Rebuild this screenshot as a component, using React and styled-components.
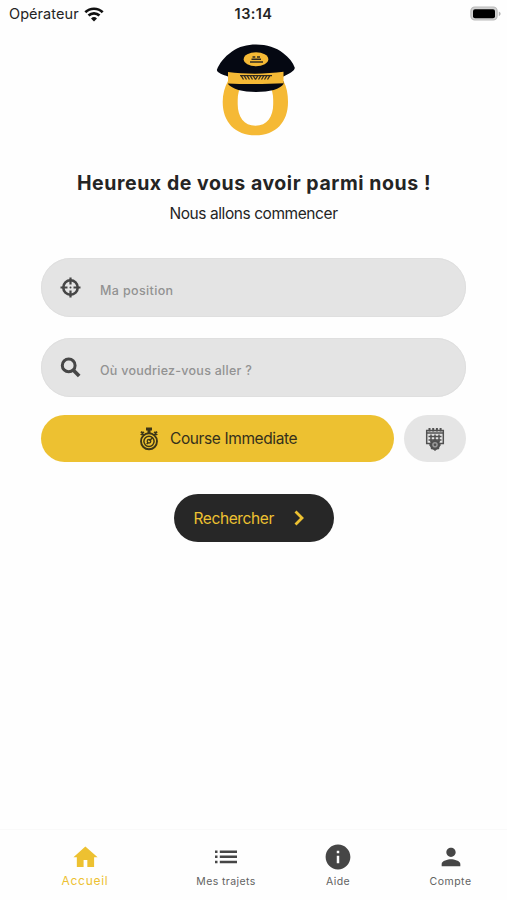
import React from "react";
import styled, { createGlobalStyle } from "styled-components";

const GlobalStyle = createGlobalStyle`
  * { box-sizing: border-box; }
  body { margin: 0; background: #fff; font-family: Inter, "Liberation Sans", sans-serif; }
  button { font-family: inherit; border: 0; padding: 0; cursor: pointer; }
  svg { display: block; flex: none; }
`;

const Screen = styled.div`
  width: 507px;
  height: 900px;
  display: flex;
  flex-direction: column;
  background: #fefefe;
  color: #242424;
  overflow: hidden;
`;

const StatusBar = styled.header`
  height: 28px;
  display: grid;
  grid-template-columns: 1fr auto 1fr;
  align-items: center;
  padding: 0 6px 0 9px;
  line-height: 28px;
`;

const Carrier = styled.div`
  display: flex;
  align-items: center;
  gap: 5px;
  font-size: 14.5px;
  letter-spacing: 0.06px;
`;

const Clock = styled.div`
  margin-right: 3px;
  font-size: 14.5px;
  font-weight: 600;
  letter-spacing: 0.4px;
`;

const BatterySlot = styled.div`
  display: flex;
  justify-content: flex-end;
`;

const Main = styled.main`
  flex: 1;
  display: flex;
  flex-direction: column;
  align-items: center;
  padding-top: 7px;
`;

const Title = styled.h1`
  margin: 25px 0 0 1px;
  font-size: 19.5px;
  font-weight: 650;
  line-height: 26px;
  letter-spacing: 0.56px;
  white-space: nowrap;
`;

const Subtitle = styled.p`
  margin: 8px 0 0;
  font-size: 15.5px;
  line-height: 20px;
  letter-spacing: -0.43px;
`;

const Form = styled.section`
  width: 425px;
  margin-top: 34px;
  display: flex;
  flex-direction: column;
`;

const Field = styled.label`
  height: 59px;
  margin-bottom: ${(p) => (p.$last ? 18 : 21)}px;
  padding: 0 20px 0 19px;
  display: flex;
  align-items: center;
  gap: 19px;
  border-radius: 30px;
  background: #e4e4e4;
  box-shadow: inset 0 0 0 1px #dfdfdf;
`;

const Placeholder = styled.span`
  padding-top: 6px;
  font-size: 12.5px;
  font-weight: 450;
  line-height: 16px;
  letter-spacing: ${(p) => p.$tracking}px;
  color: #929292;
`;

const Options = styled.div`
  display: flex;
  gap: 10px;
`;

const RideButton = styled.button`
  width: 353px;
  height: 47px;
  display: flex;
  align-items: center;
  padding-left: 97px;
  gap: 10px;
  border-radius: 24px;
  background: #edc131;
  color: #35301c;
  font-size: 15.5px;
  letter-spacing: -0.39px;
`;

const ScheduleButton = styled.button`
  width: 62px;
  height: 47px;
  display: flex;
  align-items: center;
  justify-content: center;
  border-radius: 24px;
  background: #e5e5e5;
`;

const SearchButton = styled.button`
  width: 160px;
  height: 48px;
  margin-top: 32px;
  display: flex;
  align-items: center;
  justify-content: space-between;
  padding: 0 29px 0 20px;
  border-radius: 24px;
  background: #272727;
  color: #edc131;
  font-size: 15.5px;
  letter-spacing: -0.4px;
`;

const TabBar = styled.nav`
  height: 71px;
  display: grid;
  grid-template-columns: 170px 112px 112px 113px;
  border-top: 1px solid #f9f9f9;
  background: #fefefe;
`;

const Tab = styled.a`
  display: flex;
  flex-direction: column;
  align-items: center;
  padding-top: 13px;
  gap: ${(p) => (p.$active ? 3 : 4)}px;
  color: ${(p) => (p.$active ? "#edc131" : "#464646")};
`;

const TabLabel = styled.span`
  font-size: ${(p) => (p.$active ? 12 : 10.5)}px;
  line-height: 14px;
  letter-spacing: ${(p) => p.$tracking}px;
  color: ${(p) => (p.$active ? "#edc131" : "#626262")};
`;

const WifiIcon = () => (
  <svg width="20" height="15" viewBox="0 0 18 14" fill="none" stroke="#111" strokeWidth="2.5">
    <path d="M.9 4.9a11.7 11.7 0 0 1 16.2 0" />
    <path d="M3.9 8a7.3 7.3 0 0 1 10.2 0" />
    <path d="M9 13.5 6.2 10.7a4 4 0 0 1 5.6 0Z" fill="#111" stroke="none" />
  </svg>
);

const BatteryIcon = () => (
  <svg width="31" height="16" viewBox="0 0 31 16">
    <rect x=".9" y="1" width="26.2" height="13" rx="4" fill="#d2d2d2" stroke="#b9b9b9" strokeWidth="1.2" />
    <rect x="3" y="3.3" width="22" height="9" rx="2" fill="#000" />
    <path d="M28.8 5.500c2.400.8 2.400 3.800 0 4.600Z" fill="#b5b5b5" />
  </svg>
);

const LogoMark = styled.svg`
  margin-left: 3px;
`;

const Logo = () => (
  <LogoMark width="100" height="110" viewBox="0 0 100 110">
    <path
      fill="#f5b935"
      fillRule="evenodd"
      d="M23 46h55.500c3.200 6 4.500 13 4.500 21 0 20-12 33.300-32.500 33.300S17.700 87 17.700 67c0-8 2-15 5.300-21ZM37 50c-3 4-4.300 9-4.300 15v4c0 13 6.300 21.700 17.800 21.700S68.200 82 68.200 69v-4c0-6-1.200-11-4.200-15Z"
    />
    <path fill="#050812" d="M23 46.500h55.500v2.500c-3 5-14 8-27.500 8s-24-3-28-8Z" />
    <path
      fill="#050812"
      d="M12 34.500C14 29 19 22 27 16.500 34 11.500 42 9.500 51 9.500c11 0 20 3 27 8.500 6 4.500 10 9.500 11.700 14.500.8 3-6 6.500-11.200 9H23c-5-1.500-12-4-11-7Z"
    />
    <path fill="#f5b935" d="M23 37c17 2.200 38 2.200 55.500-.2v11.400c-16 1-39 1.200-55.500.3Z" />
    <ellipse cx="51" cy="24.300" rx="12.300" ry="7" fill="#f5b935" />
    <path d="M47.500 22h2.800m1.700 0h3M46.500 24.300H56M45 27h13" stroke="#302b20" strokeWidth="1.500" />
    <path
      d="m36 40.500 2.500 4m.5-4 2.500 4m.5-4 2.500 4m.5-4 2.500 4m.5-4 2.500 4m2.500-4-2.500 4m5.500-4-2.500 4m5.500-4-2.500 4m5.500-4-2.500 4m5.500-4-2.500 4M35 40.600h32"
      fill="none"
      stroke="#302b20"
      strokeWidth="1.300"
    />
  </LogoMark>
);

const TargetIcon = () => (
  <svg width="21" height="21" viewBox="0 0 21 21" fill="none" stroke="#464646">
    <circle cx="10.500" cy="10.500" r="7.200" strokeWidth="2.600" />
    <path d="M10.500.5v7M10.500 13.500v7M.5 10.500h7M13.500 10.500h7" strokeWidth="2.200" />
    <circle cx="10.500" cy="10.500" r="1" fill="#464646" stroke="none" />
  </svg>
);

const SearchIcon = () => (
  <svg width="21" height="21" viewBox="0 0 21 21" fill="none" stroke="#464646">
    <circle cx="8.700" cy="8.400" r="6.400" strokeWidth="3" />
    <path d="m13.200 13 6 6" strokeWidth="3.700" />
  </svg>
);

const StopwatchIcon = () => (
  <svg width="22" height="24" viewBox="0 0 22 24" fill="none" stroke="#3d3517">
    <path d="M8 2h6M11 3v4" strokeWidth="3" />
    <path d="m2.800 7.800 3-3M19.200 7.800l-3-3M3 4.600l3 3.200M19 4.600l-3 3.200" strokeWidth="1.900" />
    <circle cx="11" cy="14.300" r="8" strokeWidth="1.900" />
    <circle cx="11" cy="14.300" r="5.100" strokeWidth="1.500" />
    <circle cx="11" cy="14.300" r="1.800" strokeWidth="1.300" />
    <path d="m11.500 13.800 3-3M8.700 17l1.500-1.600" strokeWidth="1.500" />
  </svg>
);

const ScheduleIcon = () => (
  <svg width="20" height="24" viewBox="0 0 20 24" fill="none" stroke="#505050">
    <path d="M5.500 16.500H1.700V3.500h16.600v13h-3.800M2 6h16" strokeWidth="1.500" />
    <path d="M4.500 1v3.500M8.200 1v3.500M11.900 1v3.500M15.600 1v3.500" strokeWidth="2" />
    <path d="M3.500 9.500h13M3.500 13h13M6 7.500V15M10 7.500V13M14 7.500V15" strokeWidth="1.500" />
    <circle cx="10" cy="17.800" r="4" fill="#999" strokeWidth="2.400" />
    <path d="M10 12v2M10 21.500v2.200M4.300 18h2M13.700 18h2M6 13.900l1.500 1.500M14 13.900l-1.500 1.500M6.100 21.900l1.500-1.500M13.900 21.900l-1.500-1.500" strokeWidth="1.600" />
    <circle cx="10" cy="17.800" r="1.300" fill="#505050" stroke="none" />
  </svg>
);

const ChevronIcon = () => (
  <svg width="12" height="18" viewBox="0 0 12 18">
    <path d="m2.500 2.500 6.500 6.500-6.500 6.500" fill="none" stroke="#edc131" strokeWidth="2.800" />
  </svg>
);

const TAB_PATHS = {
  home: "M10.800 20.500v-6h3.200v6H19.800v-8.300h3L12.300 3 2.100 12.200H5v8.300z",
  info: "M12 2C6.480 2 2 6.480 2 12s4.480 10 10 10 10-4.480 10-10S17.520 2 12 2zm1 15h-2v-6h2zm0-8h-2V7h2z",
  person: "M12 12c2.210 0 4-1.790 4-4s-1.790-4-4-4-4 1.790-4 4 1.790 4 4 4zm0 2c-2.670 0-8 1.340-8 4v2h16v-2c0-2.660-5.330-4-8-4z",
};

const TabIcon = ({ name }) =>
  name === "list" ? (
    <svg width="28" height="28" viewBox="0 0 28 28" fill="currentColor">
      <path d="M3 7.500h2.500V10H3zM3 12.600h2.500v2.500H3zM3 17.700h2.500v2.500H3zM7.800 7.500H25V10H7.800zM7.800 12.600H25v2.500H7.800zM7.800 17.700H25v2.500H7.800z" />
    </svg>
  ) : (
    <svg
      width={name === "info" ? 30 : 28}
      height="28"
      viewBox={name === "info" ? "0.700 0.700 22.600 22.600" : "0 0 24 24"}
      fill="currentColor"
    >
      <path d={TAB_PATHS[name]} />
    </svg>
  );

const tabs = [
  { label: "Accueil", icon: "home", active: true, tracking: 0.72 },
  { label: "Mes trajets", icon: "list", tracking: 0.4 },
  { label: "Aide", icon: "info", tracking: 0.4 },
  { label: "Compte", icon: "person", tracking: 0.5 },
];

export default function App() {
  return (
    <>
      <GlobalStyle />
      <Screen>
        <StatusBar>
          <Carrier>Opérateur <WifiIcon /></Carrier>
          <Clock>13:14</Clock>
          <BatterySlot><BatteryIcon /></BatterySlot>
        </StatusBar>
        <Main>
          <Logo />
          <Title>Heureux de vous avoir parmi nous !</Title>
          <Subtitle>Nous allons commencer</Subtitle>
          <Form>
            <Field>
              <TargetIcon />
              <Placeholder $tracking={0.36}>Ma position</Placeholder>
            </Field>
            <Field $last>
              <SearchIcon />
              <Placeholder $tracking={0.26}>Où voudriez-vous aller ?</Placeholder>
            </Field>
            <Options>
              <RideButton><StopwatchIcon />Course Immediate</RideButton>
              <ScheduleButton aria-label="Planifier"><ScheduleIcon /></ScheduleButton>
            </Options>
          </Form>
          <SearchButton>Rechercher<ChevronIcon /></SearchButton>
        </Main>
        <TabBar>
          {tabs.map((t) => (
            <Tab key={t.label} $active={t.active}>
              <TabIcon name={t.icon} />
              <TabLabel $active={t.active} $tracking={t.tracking}>{t.label}</TabLabel>
            </Tab>
          ))}
        </TabBar>
      </Screen>
    </>
  );
}
